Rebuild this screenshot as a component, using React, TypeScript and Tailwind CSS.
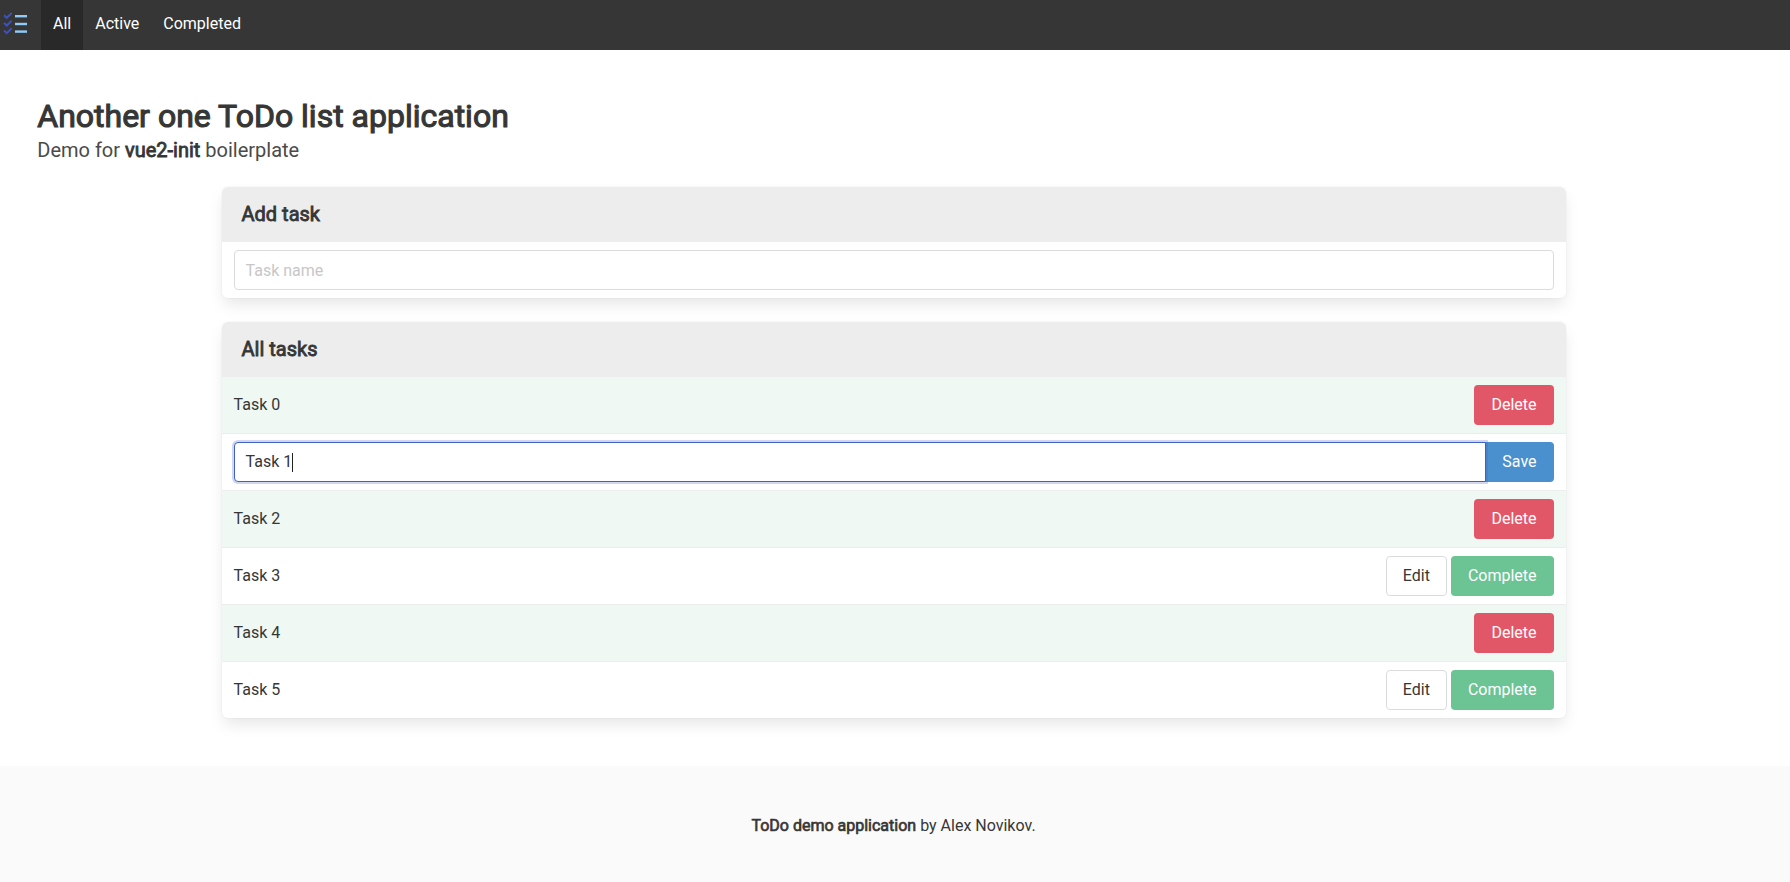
import { useState } from "react";

type Task = { name: string; state: "done" | "editing" | "open" };

const tasks: Task[] = [
  { name: "Task 0", state: "done" },
  { name: "Task 1", state: "editing" },
  { name: "Task 2", state: "done" },
  { name: "Task 3", state: "open" },
  { name: "Task 4", state: "done" },
  { name: "Task 5", state: "open" },
];

const panelClass =
  "rounded-md bg-white shadow-[0_8px_16px_-2px_rgba(10,10,10,0.1),0_0_0_1px_rgba(10,10,10,0.02)]";
const headingClass =
  "rounded-t-md bg-[#ededed] px-5 py-[15px] text-xl leading-[25px] text-[#363636] [-webkit-text-stroke:0.8px_#363636]";
const buttonClass = "h-10 shrink-0 border px-4 text-base leading-6";

function Logo() {
  return (
    <svg width="28" height="28" viewBox="0 0 28 28" fill="none">
      <g stroke="#3f51b5" strokeWidth="2">
        <path d="M3 5.2l2.8 2.6 4.9-4.8" />
        <path d="M3 12.9l2.8 2.6 4.9-4.8" />
        <path d="M3 20.5l2.8 2.6 4.9-4.8" />
      </g>
      <g fill="#90caf9">
        <rect x="14" y="5" width="12" height="2.4" />
        <rect x="14" y="12.8" width="12" height="2.4" />
        <rect x="14" y="20.4" width="12" height="2.4" />
      </g>
    </svg>
  );
}

function TaskRow({ task, last }: { task: Task; last: boolean }) {
  const [value, setValue] = useState(task.name);
  const border = last ? "" : "border-b border-[#ededed]";

  if (task.state === "editing") {
    return (
      <div className={`flex items-center px-3 py-2 ${border}`}>
        <div className="relative z-10 -mr-px flex h-10 flex-1 items-center rounded-l border border-[#3f5fce] bg-white px-[11px] shadow-[0_0_0_2px_rgba(72,95,199,0.25)]">
          <span className="text-[#363636]" onClick={() => setValue(value)}>
            {value}
          </span>
          <span className="h-[19px] w-px bg-[#222222]" />
        </div>
        <button className={`${buttonClass} rounded-r border-transparent bg-[#4a8fce] text-white`}>Save</button>
      </div>
    );
  }

  return (
    <div
      className={`flex items-center justify-between px-3 py-2 text-[#363636] ${border} ${
        task.state === "done" ? "bg-[#eff8f3]" : ""
      }`}
    >
      <span>{task.name}</span>
      {task.state === "done" ? (
        <button className={`${buttonClass} rounded border-transparent bg-[#e25768] text-white`}>Delete</button>
      ) : (
        <div className="flex gap-1">
          <button className={`${buttonClass} rounded border-[#dbdbdb] bg-white text-[#363636]`}>Edit</button>
          <button className={`${buttonClass} rounded border-transparent bg-[#6cc394] text-white`}>Complete</button>
        </div>
      )}
    </div>
  );
}

export default function App() {
  return (
    <div className="h-[882px] overflow-hidden bg-white font-[Roboto,sans-serif] text-base leading-6 text-[#4a4a4a]">
      <nav className="-mt-0.5 flex h-[52px] bg-[#363636] text-white">
        <a className="flex w-[41px] items-center pl-px">
          <Logo />
        </a>
        <a className="flex items-center bg-[#292929] px-3">All</a>
        <a className="flex items-center px-3">Active</a>
        <a className="flex items-center px-3">Completed</a>
      </nav>

      <section className="py-12">
        <header className="pl-[37.25px]">
          <h1 className="text-[32px] leading-9 text-[#363636] [-webkit-text-stroke:1.1px_#363636]">
            Another one ToDo list application
          </h1>
          <p className="mt-1 text-xl leading-[25px]">
            Demo for <strong className="font-normal text-[#363636] [-webkit-text-stroke:0.8px_#363636]">vue2-init</strong>{" "}
            boilerplate
          </p>
        </header>

        <main className="ml-[221.55px] mt-6 w-[1344px]">
          <div className={panelClass}>
            <p className={headingClass}>Add task</p>
            <div className="px-3 py-2">
              <input
                className="block h-10 w-full rounded border border-[#dbdbdb] bg-white px-[11px] outline-none placeholder:text-[#c7c7c7]"
                placeholder="Task name"
              />
            </div>
          </div>

          <div className={`mt-6 ${panelClass}`}>
            <p className={headingClass}>All tasks</p>
            {tasks.map((task, i) => (
              <TaskRow key={task.name} task={task} last={i === tasks.length - 1} />
            ))}
          </div>
        </main>
      </section>

      <footer className="h-[116px] bg-[#fafafa] pr-[3px] pt-12 text-center">
        <strong className="font-normal text-[#363636] [-webkit-text-stroke:0.65px_#363636]">ToDo demo application</strong>{" "}
        <span className="text-[#363636]">by Alex Novikov.</span>
      </footer>
    </div>
  );
}
